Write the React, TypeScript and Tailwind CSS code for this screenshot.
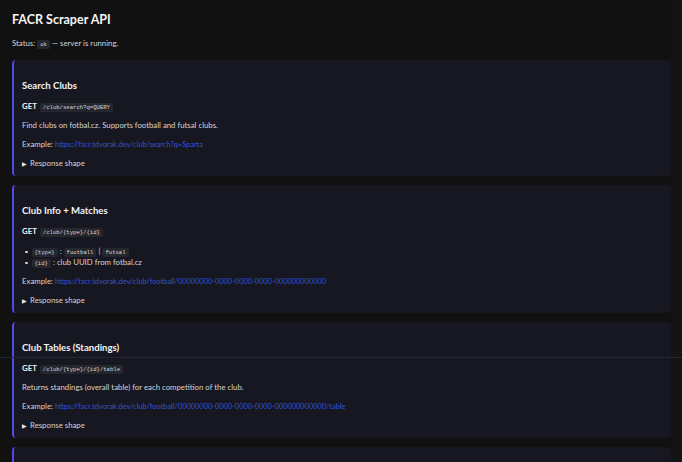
const font = { fontFamily: "Lato, 'Noto Sans', sans-serif" }

function Code({ children }: { children: React.ReactNode }) {
  return (
    <code className="rounded-[2px] bg-[#26262e] px-[3px] py-[1px] font-['Liberation_Mono',monospace] text-[5.6px] leading-none text-[#d8d8d8]">
      {children}
    </code>
  )
}

function Summary() {
  return (
    <details className="mt-[7px] h-[12px] leading-[12px]">
      <summary className="list-none text-[7.8px]">
        <span className="mr-[3px] text-[5.5px] text-[#e8e8e8]">▶</span>Response shape
      </summary>
    </details>
  )
}

function Example({ href }: { href: string }) {
  return (
    <p className="mt-[7px] h-[12px] leading-[12px]">
      <span className="text-[7.8px]">Example: </span>
      <a href={href} className="text-[#3053d6]">{href}</a>
    </p>
  )
}

function Bullet({ children }: { children: React.ReactNode }) {
  return (
    <li className="h-[11px] leading-[11px]">
      <span className="ml-[3px] mr-[4px] inline-block h-[2.5px] w-[2.5px] rounded-full bg-[#d4d4d4] align-middle" />
      {children}
    </li>
  )
}

function Card({ title, path, children }: { title: string; path: string; children: React.ReactNode }) {
  return (
    <section className="rounded-[4px] border-l-2 border-[#5547ee] bg-[#171722] pt-[20px] pb-[7px] pl-[8px] pr-3">
      <h2 className="h-[12px] text-[9.6px] font-bold leading-[12px] text-[#f2f2f2]">{title}</h2>
      <div className="mt-[8px] h-[12px] leading-[12px]">
        <span className="mr-[3px] text-[7.8px] font-bold text-[#f2f2f2]">GET</span>
        <Code>{path}</Code>
      </div>
      {children}
      <Summary />
    </section>
  )
}

export default function App() {
  return (
    <div className="relative flex h-[462px] overflow-hidden bg-[#111111] text-[7.4px] text-[#d4d4d4]" style={font}>
      <main className="w-[671px] pl-3 pt-[10px]">
        <h1 className="h-[20px] text-[12.5px] font-bold leading-[20px] text-[#f5f5f5]">FACR Scraper API</h1>
        <p className="mt-[7px] h-[12px] text-[7.8px] leading-[12px]">
          Status: <Code>ok</Code> — server is running.
        </p>

        <div className="mt-[11px] flex flex-col gap-[9px]">
          <Card title="Search Clubs" path="/club/search?q=QUERY">
            <p className="mt-[7px] h-[12px] text-[7.8px] leading-[12px]">
              Find clubs on fotbal.cz. Supports football and futsal clubs.
            </p>
            <Example href="https://facr.tdvorak.dev/club/search?q=Sparta" />
          </Card>

          <Card title="Club Info + Matches" path="/club/{type}/{id}">
            <ul className="mt-[9px] text-[7.8px]">
              <Bullet>
                <Code>{"{type}"}</Code> : <Code>football</Code> | <Code>futsal</Code>
              </Bullet>
              <Bullet>
                <Code>{"{id}"}</Code> : club UUID from fotbal.cz
              </Bullet>
            </ul>
            <Example href="https://facr.tdvorak.dev/club/football/00000000-0000-0000-0000-000000000000" />
          </Card>

          <Card title="Club Tables (Standings)" path="/club/{type}/{id}/table">
            <p className="mt-[7px] h-[12px] text-[7.8px] leading-[12px]">
              Returns standings (overall table) for each competition of the club.
            </p>
            <Example href="https://facr.tdvorak.dev/club/football/00000000-0000-0000-0000-000000000000/table" />
          </Card>

          {/* next card, cut off by the viewport */}
          <section className="h-[80px] shrink-0 rounded-[4px] border-l-2 border-[#5547ee] bg-[#171722]" />
        </div>
      </main>
      <div className="w-[11px] bg-[#141414]" />
      <div className="absolute left-0 right-0 top-[357px] h-px bg-[#262630]" />
    </div>
  )
}
